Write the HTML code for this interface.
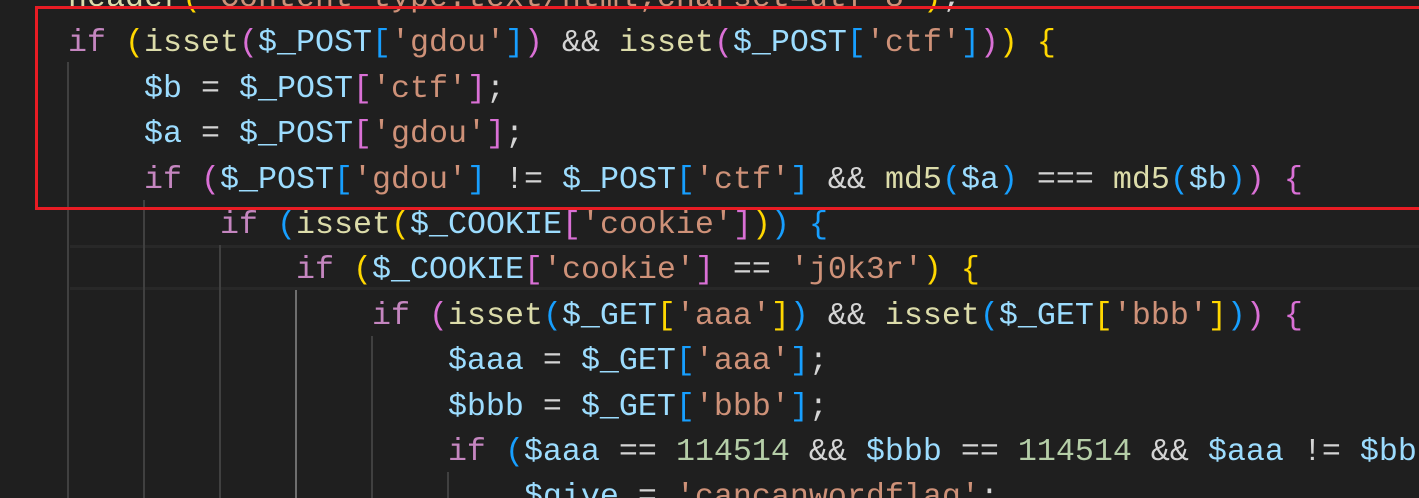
<!DOCTYPE html>
<html><head><meta charset="utf-8"><style>
html,body{margin:0;padding:0;width:1419px;height:498px;overflow:hidden;background:#1f1f1f;}
.wrap{position:relative;width:1419px;height:498px;overflow:hidden;}
.code{position:absolute;left:68px;top:-24px;font-family:"Liberation Mono","DejaVu Sans Mono",monospace;font-size:31.67px;line-height:45.4px;color:#d4d4d4;white-space:pre;}
.k{color:#c586c0}.f{color:#dcdcaa}.v{color:#9cdcfe}.s{color:#ce9178}.n{color:#b5cea8}
.g{color:#ffd700}.o{color:#da70d6}.b{color:#179fff}
.guide{position:absolute;width:2px;background:#404040;}
.cur{position:absolute;left:70px;top:245px;width:1360px;height:39px;border-top:3px solid #282828;border-bottom:3px solid #282828;}
.box{position:absolute;left:35px;top:6px;width:1400px;height:198px;border:3px solid #e81c24;}
</style></head><body><div class="wrap">
<div class="cur"></div>
<div class="guide" style="left:67px;top:62px;height:436px"></div>
<div class="guide" style="left:143px;top:200px;height:298px"></div>
<div class="guide" style="left:219px;top:245px;height:253px"></div>
<div class="guide" style="left:295px;top:290px;height:208px;background:#6e6e6e"></div>
<div class="guide" style="left:371px;top:336px;height:162px"></div>
<div class="guide" style="left:447px;top:472px;height:26px"></div>
<div class="code"><span class="f">header</span><span class="g">(</span><span class="s">'Content-type:text/html;charset=utf-8'</span><span class="g">)</span>;
<span class="k">if</span> <span class="g">(</span><span class="f">isset</span><span class="o">(</span><span class="v">$_POST</span><span class="b">[</span><span class="s">'gdou'</span><span class="b">]</span><span class="o">)</span> &amp;&amp; <span class="f">isset</span><span class="o">(</span><span class="v">$_POST</span><span class="b">[</span><span class="s">'ctf'</span><span class="b">]</span><span class="o">)</span><span class="g">)</span> <span class="g">{</span>
    <span class="v">$b</span> = <span class="v">$_POST</span><span class="o">[</span><span class="s">'ctf'</span><span class="o">]</span>;
    <span class="v">$a</span> = <span class="v">$_POST</span><span class="o">[</span><span class="s">'gdou'</span><span class="o">]</span>;
    <span class="k">if</span> <span class="o">(</span><span class="v">$_POST</span><span class="b">[</span><span class="s">'gdou'</span><span class="b">]</span> != <span class="v">$_POST</span><span class="b">[</span><span class="s">'ctf'</span><span class="b">]</span> &amp;&amp; <span class="f">md5</span><span class="b">(</span><span class="v">$a</span><span class="b">)</span> === <span class="f">md5</span><span class="b">(</span><span class="v">$b</span><span class="b">)</span><span class="o">)</span> <span class="o">{</span>
        <span class="k">if</span> <span class="b">(</span><span class="f">isset</span><span class="g">(</span><span class="v">$_COOKIE</span><span class="o">[</span><span class="s">'cookie'</span><span class="o">]</span><span class="g">)</span><span class="b">)</span> <span class="b">{</span>
            <span class="k">if</span> <span class="g">(</span><span class="v">$_COOKIE</span><span class="o">[</span><span class="s">'cookie'</span><span class="o">]</span> == <span class="s">'j0k3r'</span><span class="g">)</span> <span class="g">{</span>
                <span class="k">if</span> <span class="o">(</span><span class="f">isset</span><span class="b">(</span><span class="v">$_GET</span><span class="g">[</span><span class="s">'aaa'</span><span class="g">]</span><span class="b">)</span> &amp;&amp; <span class="f">isset</span><span class="b">(</span><span class="v">$_GET</span><span class="g">[</span><span class="s">'bbb'</span><span class="g">]</span><span class="b">)</span><span class="o">)</span> <span class="o">{</span>
                    <span class="v">$aaa</span> = <span class="v">$_GET</span><span class="b">[</span><span class="s">'aaa'</span><span class="b">]</span>;
                    <span class="v">$bbb</span> = <span class="v">$_GET</span><span class="b">[</span><span class="s">'bbb'</span><span class="b">]</span>;
                    <span class="k">if</span> <span class="b">(</span><span class="v">$aaa</span> == <span class="n">114514</span> &amp;&amp; <span class="v">$bbb</span> == <span class="n">114514</span> &amp;&amp; <span class="v">$aaa</span> != <span class="v">$bbb</span><span class="b">)</span> <span class="b">{</span>
                        <span class="v">$give</span> = <span class="s">'cancanwordflag'</span>;
</div>
<div class="box"></div>
</div></body></html>
